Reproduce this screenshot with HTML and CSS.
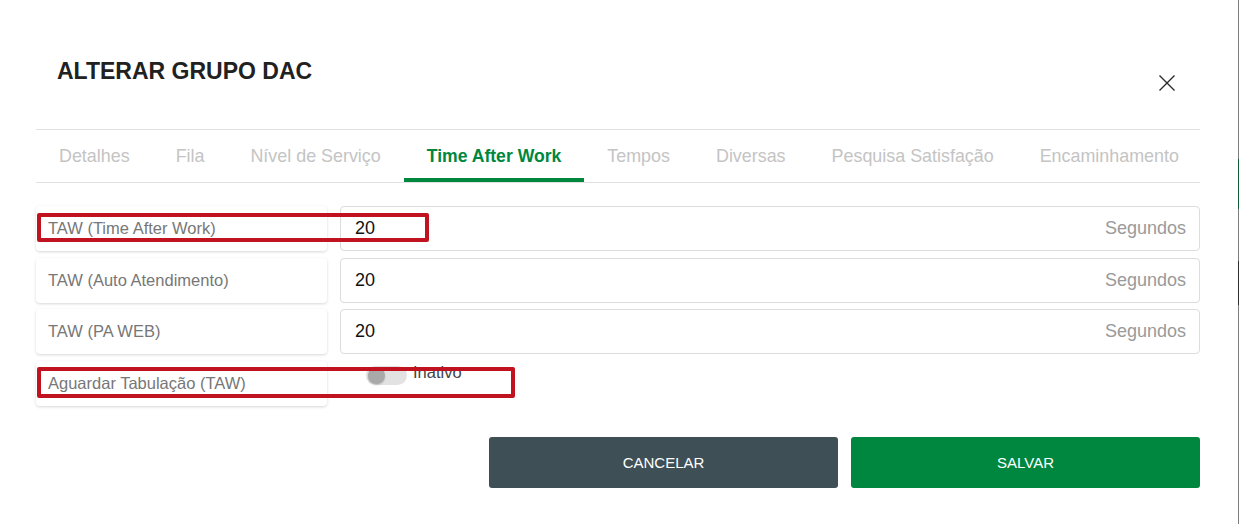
FILE: index.html
```html
<!DOCTYPE html>
<html lang="pt-BR">
<head>
<meta charset="utf-8">
<title>Alterar Grupo DAC</title>
<link rel="stylesheet" href="styles.css">
</head>
<body>
<div class="modal">
  <div class="header">
    <h1 class="title">ALTERAR GRUPO DAC</h1>
    <button class="close" aria-label="Fechar">
      <svg width="16" height="16" viewBox="0 0 16 16"><path d="M0.5 0.5 L15.5 15.5 M15.5 0.5 L0.5 15.5" stroke="#2b2b2b" stroke-width="1.4" fill="none"/></svg>
    </button>
  </div>
  <nav class="tabs">
    <div class="tab">Detalhes</div>
    <div class="tab">Fila</div>
    <div class="tab">Nível de Serviço</div>
    <div class="tab active">Time After Work</div>
    <div class="tab">Tempos</div>
    <div class="tab">Diversas</div>
    <div class="tab">Pesquisa Satisfação</div>
    <div class="tab">Encaminhamento</div>
  </nav>
  <div class="form">
    <div class="label-card">TAW (Time After Work)</div>
    <div class="input"><span class="value">20</span><span class="unit">Segundos</span></div>
    <div class="label-card">TAW (Auto Atendimento)</div>
    <div class="input"><span class="value">20</span><span class="unit">Segundos</span></div>
    <div class="label-card">TAW (PA WEB)</div>
    <div class="input"><span class="value">20</span><span class="unit">Segundos</span></div>
    <div class="label-card">Aguardar Tabulação (TAW)</div>
    <div class="switch-cell">
      <span class="track"><span class="knob"></span></span>
      <span class="switch-label">Inativo</span>
    </div>
  </div>
  <div class="actions">
    <button class="btn btn-cancel">CANCELAR</button>
    <button class="btn btn-save">SALVAR</button>
  </div>
  <div class="mark mark-1"></div>
  <div class="mark mark-2"></div>
</div>
<div class="strip"></div>
</body>
</html>
```
FILE: styles.css
```css
html, body {
  margin: 0;
  padding: 0;
}
body {
  width: 1239px;
  height: 524px;
  display: flex;
  background: #ffffff;
  font-family: "Liberation Sans", Arial, sans-serif;
  overflow: hidden;
}
.modal {
  position: relative;
  flex: 1;
  min-width: 0;
  padding: 0 38px 0 36px;
  background: #ffffff;
}
.strip {
  width: 1px;
  flex: none;
  height: 524px;
  background: linear-gradient(to bottom,
    #7d7d7d 0, #7d7d7d 159px,
    #0b5a3a 159px, #0b5a3a 209px,
    #7d7d7d 209px, #7d7d7d 261px,
    #2e2e2e 261px, #2e2e2e 305px,
    #7d7d7d 305px);
}
.header {
  height: 129px;
  display: flex;
  justify-content: space-between;
  align-items: flex-start;
}
.title {
  margin: 57px 0 0 21px;
  font-size: 23px;
  line-height: 28px;
  font-weight: bold;
  color: #212121;
}
.close {
  margin: 75px 25px 0 0;
  padding: 0;
  border: 0;
  background: none;
  width: 16px;
  height: 16px;
  display: block;
}
.close svg {
  display: block;
}
.tabs {
  display: flex;
  overflow: hidden;
  border-top: 1px solid #e2e2e2;
  border-bottom: 1px solid #e2e2e2;
}
.tab {
  flex: none;
  padding: 0 23px;
  height: 52px;
  line-height: 52px;
  font-size: 17.9px;
  color: #c4c4c4;
  white-space: nowrap;
}
.tab.active {
  color: #00873e;
  font-weight: bold;
  font-size: 17.6px;
  box-shadow: inset 0 -4px 0 #00873e;
}
.form {
  margin-top: 23px;
  display: grid;
  grid-template-columns: 291px minmax(0, 1fr);
  grid-auto-rows: 45px;
  column-gap: 13px;
  row-gap: 6.5px;
}
.label-card {
  display: flex;
  align-items: center;
  padding-left: 12px;
  background: #ffffff;
  border-radius: 4px;
  box-shadow: 0 1px 3px rgba(0, 0, 0, 0.16);
  font-size: 16.5px;
  color: #777777;
}
.input {
  display: flex;
  align-items: center;
  justify-content: space-between;
  padding: 0 13px 0 14px;
  border: 1px solid #dcdcdc;
  border-radius: 4px;
  font-size: 18px;
}
.value {
  color: #111111;
}
.unit {
  color: #9a9a9a;
}
.switch-cell {
  display: flex;
  align-items: flex-start;
  padding: 5px 0 0 26px;
  gap: 6px;
}
.track {
  width: 41px;
  height: 19px;
  border-radius: 10px;
  background: #e2e2e2;
  display: flex;
  align-items: center;
  padding: 0 2px;
  box-sizing: border-box;
}
.knob {
  width: 17px;
  height: 17px;
  border-radius: 50%;
  background: #a9a9a9;
  box-shadow: 0 1px 2px rgba(0, 0, 0, 0.2);
}
.switch-label {
  margin-top: -2px;
  font-size: 16.5px;
  line-height: 16px;
  color: #444444;
}
.actions {
  margin-top: 31.5px;
  display: flex;
  justify-content: flex-end;
  gap: 13px;
}
.btn {
  width: 349px;
  height: 51px;
  border: 0;
  border-radius: 3px;
  color: #ffffff;
  font-family: "Liberation Sans", Arial, sans-serif;
  font-size: 15px;
}
.btn-cancel {
  background: #3e4f56;
}
.btn-save {
  background: #00873f;
}
.mark {
  position: absolute;
  box-sizing: border-box;
  border: 4px solid #c1121f;
  border-radius: 2px;
}
.mark-1 {
  left: 37px;
  top: 213px;
  width: 392px;
  height: 29px;
}
.mark-2 {
  left: 37px;
  top: 367px;
  width: 478px;
  height: 31px;
}
```
